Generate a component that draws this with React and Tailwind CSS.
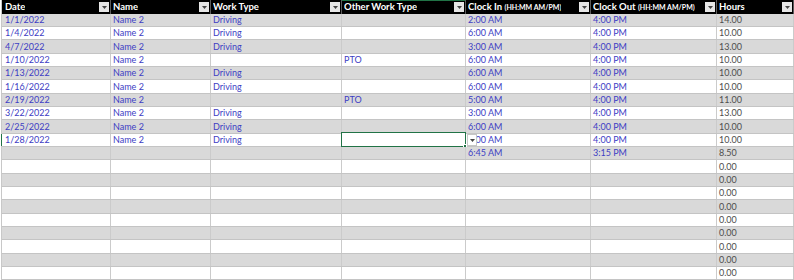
import React from "react";

const cols = [
  { key: "date", w: "w-[109px]", pl: "pl-[3px]" },
  { key: "name", w: "w-[100px]", pl: "pl-[2px]" },
  { key: "work", w: "w-[131px]", pl: "pl-[2px]" },
  { key: "other", w: "w-[124px]", pl: "pl-[2px]" },
  { key: "in", w: "w-[125px]", pl: "pl-[2px]" },
  { key: "out", w: "w-[126px]", pl: "pl-[2px]" },
  { key: "hours", w: "w-[77px]", pl: "pl-[2px]" },
];

const rows = [
  ["1/1/2022", "Name 2", "Driving", "", "2:00 AM", "4:00 PM", "14.00"],
  ["1/4/2022", "Name 2", "Driving", "", "6:00 AM", "4:00 PM", "10.00"],
  ["4/7/2022", "Name 2", "Driving", "", "3:00 AM", "4:00 PM", "13.00"],
  ["1/10/2022", "Name 2", "", "PTO", "6:00 AM", "4:00 PM", "10.00"],
  ["1/13/2022", "Name 2", "Driving", "", "6:00 AM", "4:00 PM", "10.00"],
  ["1/16/2022", "Name 2", "Driving", "", "6:00 AM", "4:00 PM", "10.00"],
  ["2/19/2022", "Name 2", "", "PTO", "5:00 AM", "4:00 PM", "11.00"],
  ["3/22/2022", "Name 2", "Driving", "", "3:00 AM", "4:00 PM", "13.00"],
  ["2/25/2022", "Name 2", "Driving", "", "6:00 AM", "4:00 PM", "10.00"],
  ["1/28/2022", "Name 2", "Driving", "", "6:00 AM", "4:00 PM", "10.00"],
  ["", "", "", "", "6:45 AM", "3:15 PM", "8.50"],
  ["", "", "", "", "", "", "0.00"],
  ["", "", "", "", "", "", "0.00"],
  ["", "", "", "", "", "", "0.00"],
  ["", "", "", "", "", "", "0.00"],
  ["", "", "", "", "", "", "0.00"],
  ["", "", "", "", "", "", "0.00"],
  ["", "", "", "", "", "", "0.00"],
  ["", "", "", "", "", "", "0.00"],
  ["", "", "", "", "", "", "0.00"],
];

function Drop({ white }) {
  return (
    <div
      className={
        "flex h-[10px] w-[10px] shrink-0 items-center justify-center " +
        (white ? "bg-white border border-[#c6c6c6]" : "bg-[#e6e6e6]")
      }
    >
      <svg width="5" height="3" viewBox="0 0 5 3">
        <path d="M0 0 L5 0 L2.5 3 Z" fill="#444" />
      </svg>
    </div>
  );
}

function HeaderCell({ col, children, green }) {
  return (
    <div
      className={
        col.w +
        " relative flex h-[14px] shrink-0 items-center justify-between border-r border-[#5a5a5a] bg-black pr-[1px] " +
        col.pl
      }
    >
      {green && <div className="absolute left-0 right-0 top-0 h-[1px] bg-[#217346]" />}
      <span className="truncate whitespace-nowrap text-[9.5px] font-bold leading-[14px] text-white">
        {children}
      </span>
      <Drop />
    </div>
  );
}

export default function App() {
  return (
    <div
      className="h-[280px] w-[794px] overflow-hidden bg-white"
      style={{ fontFamily: "Lato, 'Liberation Sans', sans-serif" }}
    >
      <div className="ml-[1px] flex flex-col border-l border-[#c8c8c8]">
        <div className="flex">
          <HeaderCell col={cols[0]}>Date</HeaderCell>
          <HeaderCell col={cols[1]}>Name</HeaderCell>
          <HeaderCell col={cols[2]}>Work Type</HeaderCell>
          <HeaderCell col={cols[3]} green>
            Other Work Type
          </HeaderCell>
          <HeaderCell col={cols[4]}>
            Clock In <span className="text-[7px]">(HH:MM AM/PM)</span>
          </HeaderCell>
          <HeaderCell col={cols[5]}>
            Clock Out <span className="text-[7px]">(HH:MM AM/PM)</span>
          </HeaderCell>
          <HeaderCell col={cols[6]}>Hours</HeaderCell>
        </div>
        {rows.map((r, i) => {
          const gray = i % 2 === 0;
          const h = i % 3 === 2 ? "h-[14px]" : "h-[13px]";
          return (
            <div
              key={i}
              className={
                "relative flex border-b border-[#c4c4c4] " +
                h +
                " " +
                (gray ? "bg-[#d9d9d9]" : "bg-white")
              }
            >
              {i === 9 && (
                <div className="absolute -left-[1px] top-0 bottom-0 w-[1px] bg-[#217346]" />
              )}
              {cols.map((c, j) => {
                const selected = i === 9 && j === 3;
                return (
                  <div
                    key={c.key}
                    className={
                      c.w +
                      " relative flex shrink-0 items-center border-r border-[#cbcbcb] " +
                      c.pl
                    }
                  >
                    <span
                      className={
                        "whitespace-nowrap text-[9px] leading-[12px] " +
                        (j === 6 ? "text-[#4d4d4d]" : "text-[#3d3dc4]")
                      }
                    >
                      {r[j]}
                    </span>
                    {selected && (
                      <>
                        <div className="absolute -left-[1px] -top-[2px] -bottom-[1px] -right-[1px] border-[1.5px] border-[#217346] bg-white" />
                        <div className="absolute -bottom-[2px] -right-[2px] h-[4px] w-[4px] border border-white bg-[#217346]" />
                        <div className="absolute -right-[12px] top-[0px] z-10 flex h-[12px] w-[10px] items-center justify-center border border-[#c6c6c6] bg-white">
                          <svg width="5" height="3" viewBox="0 0 5 3">
                            <path d="M0 0 L5 0 L2.5 3 Z" fill="#444" />
                          </svg>
                        </div>
                      </>
                    )}
                  </div>
                );
              })}
            </div>
          );
        })}
      </div>
    </div>
  );
}
